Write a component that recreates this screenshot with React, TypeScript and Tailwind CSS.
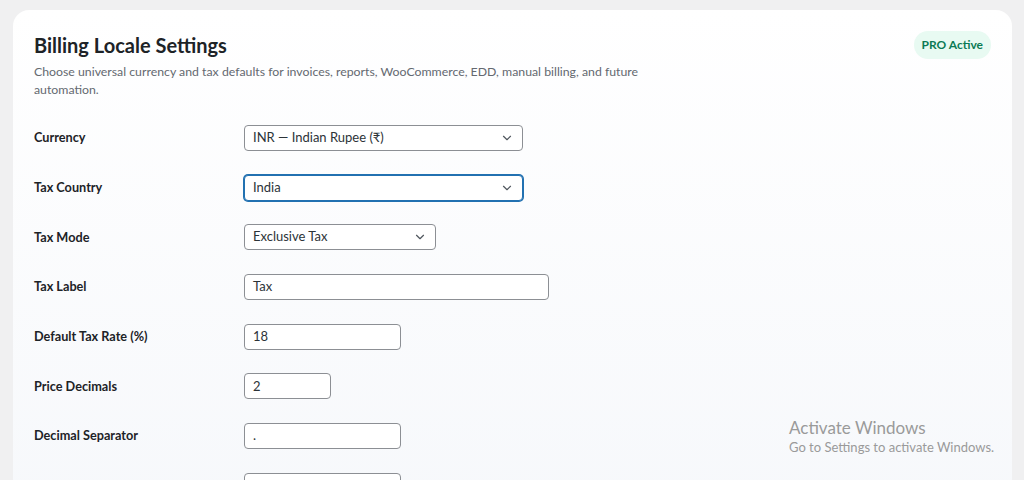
import { ChevronDown } from 'lucide-react';

type Field = {
  label: string;
  value: string;
  width: string;
  select?: boolean;
  focused?: boolean;
};

const fields: Field[] = [
  { label: 'Currency', value: 'INR — Indian Rupee (₹)', width: 'w-[279px]', select: true },
  { label: 'Tax Country', value: 'India', width: 'w-[279px]', select: true, focused: true },
  { label: 'Tax Mode', value: 'Exclusive Tax', width: 'w-[192px]', select: true },
  { label: 'Tax Label', value: 'Tax', width: 'w-[305px]' },
  { label: 'Default Tax Rate (%)', value: '18', width: 'w-[157px]' },
  { label: 'Price Decimals', value: '2', width: 'w-[87px]' },
  { label: 'Decimal Separator', value: '.', width: 'w-[157px]' },
  // next row is only partly on screen; its text sits below the fold
  { label: '', value: '', width: 'w-[157px]' },
];

function FieldRow({ field }: { field: Field }) {
  const border = field.focused
    ? 'border-[#2271b1] shadow-[0_0_0_1px_#2271b1]'
    : 'border-[#8c8f94]';
  return (
    <div className="flex items-center h-[49.7px]">
      <div className="w-[210px] text-[12.7px] font-bold text-[#1d2327]">{field.label}</div>
      <div
        className={`${field.width} h-[26px] flex items-center justify-between rounded-[4px] border bg-white pl-[8px] pr-[8px] ${border}`}
      >
        <span className="text-[13px] text-[#2c3338]">{field.value}</span>
        {field.select && <ChevronDown size={14} strokeWidth={2} className="text-[#50575e]" />}
      </div>
    </div>
  );
}

export default function App() {
  return (
    <div
      className="relative h-[480px] overflow-hidden bg-[#f0f0f1] pt-[10px] pl-[13px]"
      style={{ fontFamily: 'Lato, "Noto Sans", sans-serif' }}
    >
      <div className="w-[999px] min-h-[520px] rounded-[16px] bg-gradient-to-b from-white to-[#f6f8fb] p-[21px]">
        <div className="flex justify-between items-start">
          <div>
            <h1 className="text-[20px] leading-[28px] font-bold text-[#1d2327]">Billing Locale Settings</h1>
            <p className="mt-[4px] w-[610px] text-[12.3px] leading-[18px] text-[#646970]">
              Choose universal currency and tax defaults for invoices, reports, WooCommerce, EDD, manual billing, and future
              automation.
            </p>
          </div>
          <span className="rounded-full bg-[#e8faf2] px-[8px] h-[28px] flex items-center text-[12px] font-bold text-[#0b7a55]">
            PRO Active
          </span>
        </div>

        <div className="mt-[14px] flex flex-col">
          {fields.map((f, i) => (
            <FieldRow key={i} field={f} />
          ))}
        </div>
      </div>

      {/* system watermark */}
      <div className="absolute left-[789px] top-[418px] pointer-events-none text-[#9a9a9a]">
        <div className="text-[17px] leading-[20px]">Activate Windows</div>
        <div className="text-[13px] leading-[19px]">Go to Settings to activate Windows.</div>
      </div>
    </div>
  );
}
